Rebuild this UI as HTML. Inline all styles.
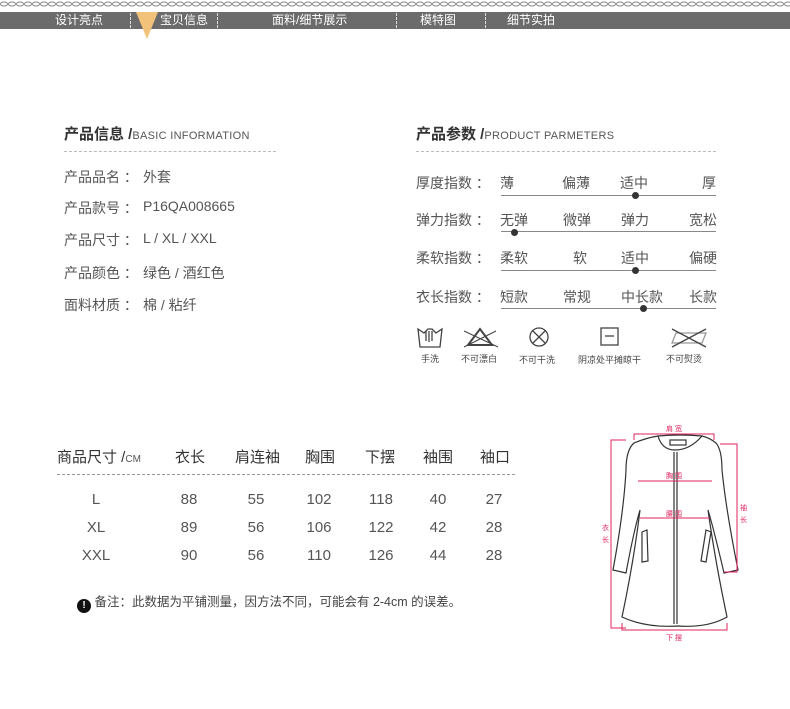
<!DOCTYPE html>
<html><head><meta charset="utf-8"><style>
*{margin:0;padding:0;box-sizing:border-box}
body{width:790px;height:709px;background:#fff;position:relative;overflow:hidden;font-family:"Liberation Sans","Noto Sans CJK SC",sans-serif;color:#555}
.a{position:absolute;white-space:nowrap}
.bar{position:absolute;left:0;top:12px;width:790px;height:17px;background:#6b6b6b}
.nav{position:absolute;top:12px;font-size:12px;color:#fff;line-height:17px}
.sep{position:absolute;top:13px;height:15px;border-left:1px dashed #ddd}
.h{font-size:15px;font-weight:bold;color:#333}
.h span{font-size:11px;font-weight:normal;color:#555;letter-spacing:.3px}
.dash{position:absolute;border-top:1px dashed #bbb;height:0}
.li{font-size:14px;color:#555}
.v{position:absolute;left:79px;top:0}
.line{position:absolute;height:1px;background:#888}
.dot{position:absolute;width:7px;height:7px;border-radius:50%;background:#333}
.ic{font-size:9px;color:#444}
.t{font-size:15px;color:#555;text-align:center;position:absolute;width:50px}
</style></head><body>
<svg class="a" style="left:0;top:0" width="790" height="10"><defs><pattern id="c" width="8" height="10" patternUnits="userSpaceOnUse"><ellipse cx="4" cy="4" rx="3.5" ry="2" fill="none" stroke="#888" stroke-width="1"/></pattern></defs><rect width="790" height="9" fill="url(#c)"/></svg>
<div class="bar"></div>
<div class="nav" style="left:55px">设计亮点</div>
<div class="sep" style="left:130px"></div>
<svg class="a" style="left:136px;top:12px" width="22" height="27"><polygon points="0,0 22,0 11,27" fill="#f2c27a"/></svg>
<div class="nav" style="left:160px">宝贝信息</div>
<div class="sep" style="left:217px"></div>
<div class="nav" style="left:272px">面料/细节展示</div>
<div class="sep" style="left:396px"></div>
<div class="nav" style="left:420px">模特图</div>
<div class="sep" style="left:485px"></div>
<div class="nav" style="left:507px">细节实拍</div>

<div class="a h" style="left:64px;top:123px">产品信息 /<span>BASIC INFORMATION</span></div>
<div class="dash" style="left:64px;top:151px;width:212px"></div>
<div class="a li" style="left:64px;top:167px;width:200px">产品品名 ：<span class="v">外套</span></div>
<div class="a li" style="left:64px;top:198px;width:200px">产品款号 ：<span class="v">P16QA008665</span></div>
<div class="a li" style="left:64px;top:230px;width:200px">产品尺寸 ：<span class="v">L / XL / XXL</span></div>
<div class="a li" style="left:64px;top:263px;width:200px">产品颜色 ：<span class="v">绿色 / 酒红色</span></div>
<div class="a li" style="left:64px;top:295px;width:200px">面料材质 ：<span class="v">棉 / 粘纤</span></div>

<div class="a h" style="left:416px;top:123px">产品参数 /<span>PRODUCT PARMETERS</span></div>
<div class="dash" style="left:416px;top:151px;width:300px"></div>

<div class="a li" style="left:416px;top:173px">厚度指数 ：</div>
<div class="a li" style="left:500px;top:173px">薄</div><div class="a li" style="left:562px;top:173px">偏薄</div><div class="a li" style="left:620px;top:173px">适中</div><div class="a li" style="left:702px;top:173px">厚</div>
<div class="line" style="left:501px;top:195px;width:215px"></div><div class="dot" style="left:632px;top:192px"></div>

<div class="a li" style="left:416px;top:210px">弹力指数 ：</div>
<div class="a li" style="left:500px;top:210px">无弹</div><div class="a li" style="left:563px;top:210px">微弹</div><div class="a li" style="left:621px;top:210px">弹力</div><div class="a li" style="left:689px;top:210px">宽松</div>
<div class="line" style="left:501px;top:231px;width:215px"></div><div class="dot" style="left:511px;top:229px"></div>

<div class="a li" style="left:416px;top:248px">柔软指数 ：</div>
<div class="a li" style="left:500px;top:248px">柔软</div><div class="a li" style="left:573px;top:248px">软</div><div class="a li" style="left:621px;top:248px">适中</div><div class="a li" style="left:689px;top:248px">偏硬</div>
<div class="line" style="left:501px;top:270px;width:215px"></div><div class="dot" style="left:632px;top:267px"></div>

<div class="a li" style="left:416px;top:287px">衣长指数 ：</div>
<div class="a li" style="left:500px;top:287px">短款</div><div class="a li" style="left:563px;top:287px">常规</div><div class="a li" style="left:621px;top:287px">中长款</div><div class="a li" style="left:689px;top:287px">长款</div>
<div class="line" style="left:501px;top:308px;width:215px"></div><div class="dot" style="left:640px;top:305px"></div>

<svg class="a" style="left:416px;top:325px" width="310" height="26" fill="none" stroke="#444" stroke-width="1.3">
<path d="M2 4 L8 8 L12 4 L16 4 L20 8 L26 4 L24 22 L4 22 Z"/><path d="M10 6 L10 16 M13 6 L13 17 M16 6 L16 16"/>
<path d="M52 20 L64 4 L76 20 Z" stroke-width="2"/><path d="M48 6 L82 22 M80 6 L48 22" stroke-width="1"/>
<circle cx="123" cy="12" r="9"/><path d="M117 6 L129 18 M129 6 L117 18"/>
<rect x="185" y="3" width="17" height="17"/><path d="M189 11 L198 11"/>
<path d="M256 18 L260 8 L290 8 L286 18 Z M256 18 L286 18" stroke="#999"/><path d="M256 4 L290 22 M290 4 L256 22"/>
</svg>
<div class="a ic" style="left:421px;top:352px">手洗</div>
<div class="a ic" style="left:461px;top:352px">不可漂白</div>
<div class="a ic" style="left:519px;top:353px">不可干洗</div>
<div class="a ic" style="left:578px;top:353px">阴凉处平摊晾干</div>
<div class="a ic" style="left:666px;top:352px">不可熨烫</div>

<div class="a" style="left:57px;top:446px;font-size:15px;color:#333">商品尺寸 /<span style="font-size:10px;color:#555">CM</span></div>
<div class="t" style="left:165px;top:446px;color:#333">衣长</div>
<div class="t" style="left:230px;top:446px;color:#333;width:55px">肩连袖</div>
<div class="t" style="left:295px;top:446px;color:#333">胸围</div>
<div class="t" style="left:355px;top:446px;color:#333">下摆</div>
<div class="t" style="left:413px;top:446px;color:#333">袖围</div>
<div class="t" style="left:470px;top:446px;color:#333">袖口</div>
<div class="dash" style="left:57px;top:474px;width:458px;border-color:#999"></div>
<div class="t" style="left:71px;top:491px">L</div><div class="t" style="left:164px;top:491px">88</div><div class="t" style="left:231px;top:491px">55</div><div class="t" style="left:294px;top:491px">102</div><div class="t" style="left:356px;top:491px">118</div><div class="t" style="left:413px;top:491px">40</div><div class="t" style="left:469px;top:491px">27</div>
<div class="t" style="left:71px;top:519px">XL</div><div class="t" style="left:164px;top:519px">89</div><div class="t" style="left:231px;top:519px">56</div><div class="t" style="left:294px;top:519px">106</div><div class="t" style="left:356px;top:519px">122</div><div class="t" style="left:413px;top:519px">42</div><div class="t" style="left:469px;top:519px">28</div>
<div class="t" style="left:71px;top:547px">XXL</div><div class="t" style="left:164px;top:547px">90</div><div class="t" style="left:231px;top:547px">56</div><div class="t" style="left:294px;top:547px">110</div><div class="t" style="left:356px;top:547px">126</div><div class="t" style="left:413px;top:547px">44</div><div class="t" style="left:469px;top:547px">28</div>
<div class="a" style="left:77px;top:591px;font-size:12.5px;color:#444"><span style="display:inline-block;width:14px;height:14px;border-radius:50%;background:#111;color:#fff;text-align:center;font-weight:bold;font-size:10px;line-height:14px;vertical-align:-2px">!</span> 备注：此数据为平铺测量，因方法不同，可能会有 2-4cm 的误差。</div>

<svg class="a" style="left:590px;top:410px" width="170" height="240" fill="none">
<g stroke="#333" stroke-width="1.2">
<path d="M44 33 Q56 28 68 26 Q90 24 112 26 Q120 28 126 33 Q132 40 132 60 Q136 100 148 160 L134 163 Q124 120 118 100 Q125 150 137 207 Q118 218 88 216 Q56 218 32 207 Q44 150 50 100 Q44 120 36 163 L23 160 Q34 100 36 60 Q36 40 44 33 Z"/>
<path d="M68 26 Q72 40 85 40 Q100 40 112 26"/>
<rect x="80" y="30" width="16" height="5"/>
<path d="M84 42 L84 214 M87 42 L87 214"/>
<path d="M52 122 L57 120 L58 151 L52 152 Z M116 120 L121 122 L116 152 L111 151 Z"/>
</g>
<g stroke="#e0245e" stroke-width="1">
<path d="M44 30 L44 24 L124 24 L124 30"/>
<path d="M36 30 L21 30 L21 218 L36 218"/>
<path d="M130 34 L147 34 L147 162 L134 162"/>
<path d="M48 71 L122 71 M50 108 L120 108"/>
<path d="M32 213 L32 220 L137 220 L137 213"/>
</g>
<g fill="#e0245e" font-size="7">
<text x="76" y="21">肩 宽</text><text x="76" y="68">胸 围</text><text x="76" y="106">腰 围</text>
<text x="12" y="120">衣</text><text x="12" y="132">长</text>
<text x="150" y="100">袖</text><text x="150" y="112">长</text>
<text x="76" y="230">下 摆</text>
</g>
</svg>
</body></html>
